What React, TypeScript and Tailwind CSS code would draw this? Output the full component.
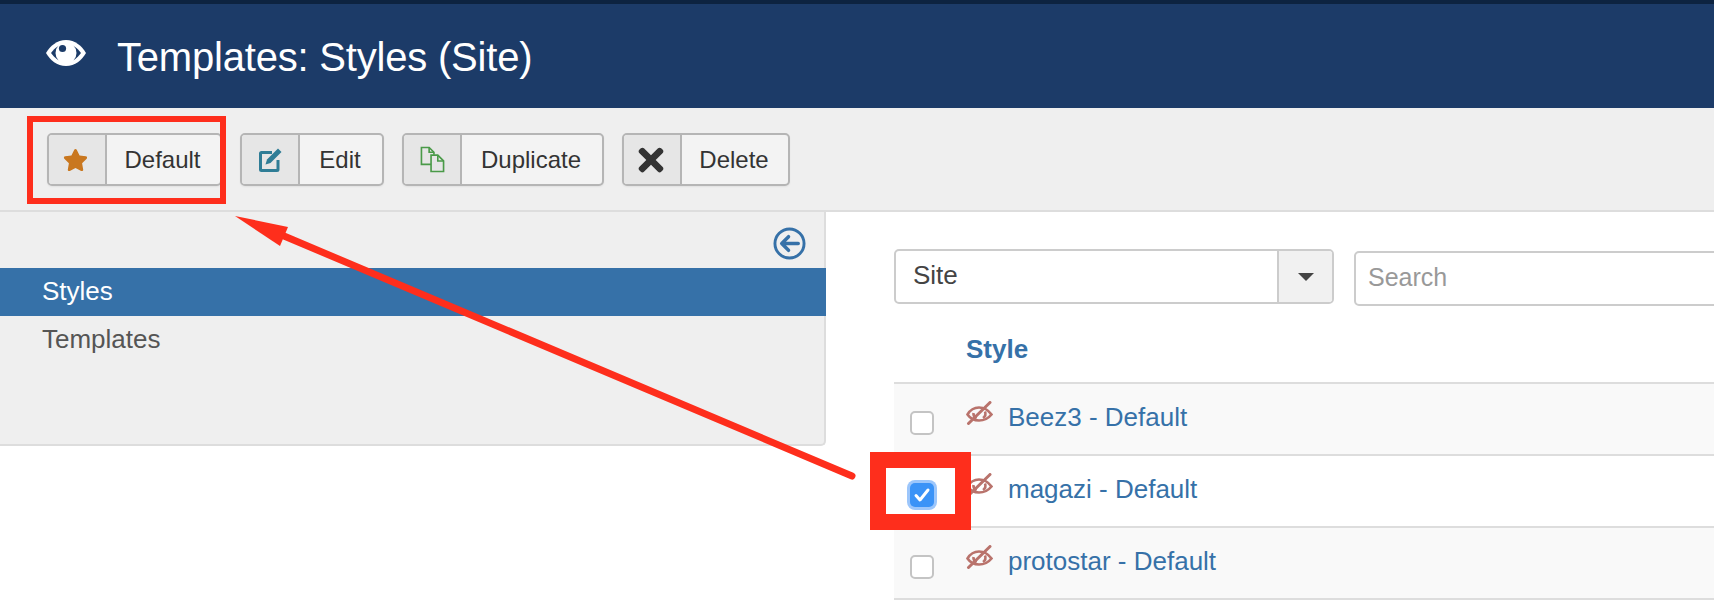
import { FaStar, FaTimes } from 'react-icons/fa';

const font = "font-['Liberation_Sans',Arial,sans-serif]";

function EyeOn({ className }: { className?: string }) {
  return (
    <svg viewBox="0 0 40 26" className={className} aria-hidden="true">
      <path fill="currentColor" d="M20 0C11 0 4 6 0 13c4 7 11 13 20 13s16-6 20-13C36 6 29 0 20 0z" />
      <path fill="#1c3b68" d="M20 4C13.500 4 8.500 8 5 13c3.500 5 8.500 9 15 9s11.500-4 15-9c-3.500-5-8.500-9-15-9z" />
      <circle cx="20" cy="13" r="10.500" fill="currentColor" />
      <circle cx="16.500" cy="8.500" r="3.600" fill="#1c3b68" />
    </svg>
  );
}

function EyeOff() {
  return (
    <svg viewBox="0 0 27 24" className="h-[24px] w-[27px] text-[#b9736c]" fill="none" stroke="currentColor" aria-hidden="true">
      <path strokeWidth="2.600" d="M1.500 13.500C4 9.300 8 6.500 13 6.500s9.500 2.800 12.500 7c-3 3.700-7.500 6-12.500 6s-9-2.300-11.500-6z" />
      <path strokeWidth="2.600" d="M7.500 12a5.500 5.500 0 0 0 3 5.500M19 10.500a5.500 5.500 0 0 1-2 6.500" />
      <path strokeWidth="3" strokeLinecap="round" d="M2.500 22.500 24 1.500" />
    </svg>
  );
}

function EditIcon() {
  return (
    <svg viewBox="0 0 24 24" className="h-[24px] w-[24px] text-[#2f7d96]" aria-hidden="true">
      <path fill="none" stroke="currentColor" strokeWidth="3" d="M14 4.500H3.500a1 1 0 0 0-1 1v16a1 1 0 0 0 1 1h15.500a1 1 0 0 0 1-1V12" />
      <path fill="currentColor" d="M20 .500l3.500 3.500-11 11-5 1.500L9 11.500z" />
    </svg>
  );
}

function DuplicateIcon() {
  return (
    <svg viewBox="0 0 26 28" className="h-[27px] w-[25px] text-[#4a9a48]" fill="none" stroke="currentColor" strokeWidth="1.700" aria-hidden="true">
      <path d="M12 19H1.500V1.500h8l5 5V9" />
      <path d="M9.500 1.500v5h5" />
      <path d="M11.500 9.500h7l6 6v11h-13z" fill="#e6e6e6" />
      <path d="M18.500 9.500v6h6" />
    </svg>
  );
}

function BackIcon() {
  return (
    <svg viewBox="0 0 34 34" className="h-[33px] w-[33px] text-[#3671a8]" fill="none" stroke="currentColor" aria-hidden="true">
      <circle cx="17" cy="17" r="15" strokeWidth="3" />
      <path d="M26 17H9.500M16 10 9 17l7 7" strokeWidth="3.600" strokeLinecap="round" strokeLinejoin="round" />
    </svg>
  );
}

function ToolButton({ icon, label, labelWidth }: { icon: React.ReactNode; label: string; labelWidth: string }) {
  return (
    <button
      type="button"
      className={`flex h-[53px] overflow-hidden rounded-[5px] border-2 border-[#b5b5b5] bg-[#f3f3f3] text-[24px] text-[#333] shadow-[0_1px_2px_rgba(0,0,0,0.06)] ${labelWidth}`}
    >
      <span className="flex h-full w-[58px] shrink-0 items-center justify-center border-r-2 border-[#b5b5b5] bg-[#e6e6e6]">
        {icon}
      </span>
      <span className="flex flex-1 items-center justify-center pr-[2px]">{label}</span>
    </button>
  );
}

function Row({ name, striped, checked }: { name: string; striped: boolean; checked?: boolean }) {
  return (
    <div className={`flex h-[72px] items-center border-b-2 border-[#dddddd] ${striped ? 'bg-[#f9f9f9]' : 'bg-white'}`}>
      <div className="flex w-[72px] justify-start pl-[16px] pt-[8px]">
        {checked ? (
          <span className="flex h-[24px] w-[24px] items-center justify-center rounded-[5px] bg-[#3b93f7] shadow-[0_0_0_3px_#9cc6fb]">
            <svg viewBox="0 0 24 24" className="h-[24px] w-[24px]" fill="none" stroke="white" strokeWidth="3" strokeLinecap="round" strokeLinejoin="round" aria-hidden="true">
              <path d="M6 12.500l4 4.500 8-10" />
            </svg>
          </span>
        ) : (
          <span className="h-[24px] w-[24px] rounded-[5px] border-2 border-[#c4c4c4] bg-white" />
        )}
      </div>
      <div className="mb-[12px]">
        <EyeOff />
      </div>
      <a className="ml-[15px] mb-[4px] text-[26px] text-[#3671a8]">{name}</a>
    </div>
  );
}

export default function App() {
  return (
    <div className={`relative h-[616px] w-[1714px] overflow-hidden bg-white ${font}`}>
      <header className="flex h-[108px] items-center border-t-[4px] border-[#0d2340] bg-[#1c3b68] pl-[46px] text-white">
        <EyeOn className="mb-[7px] h-[26px] w-[40px]" />
        <h1 className="ml-[31px] pt-[1px] text-[40px] font-normal tracking-[-0.2px]">Templates: Styles (Site)</h1>
      </header>

      <div className="flex h-[104px] gap-[18px] border-b-2 border-[#dddddd] bg-[#efefef] pl-[47px] pt-[25px]">
        <ToolButton icon={<FaStar className="mr-[4px] h-[24px] w-[25px] text-[#c9771f]" />} label="Default" labelWidth="w-[175px]" />
        <ToolButton icon={<EditIcon />} label="Edit" labelWidth="w-[144px]" />
        <ToolButton icon={<DuplicateIcon />} label="Duplicate" labelWidth="w-[202px]" />
        <ToolButton icon={<FaTimes className="mr-[2px] h-[36px] w-[36px] text-[#333]" />} label="Delete" labelWidth="w-[168px]" />
      </div>

      <div className="flex">
        <aside className="h-[234px] w-[826px] shrink-0 rounded-br-[5px] border-r-2 border-b-2 border-[#dddddd] bg-[#efefef]">
          <div className="flex h-[56px] items-center justify-end pr-[18px] pt-[6px]">
            <BackIcon />
          </div>
          <div className="mr-[-2px] flex h-[48px] items-center bg-[#3671a8] pb-[2px] pl-[42px] text-[26px] text-white">Styles</div>
          <div className="flex h-[48px] items-center pb-[2px] pl-[42px] text-[26px] text-[#555]">Templates</div>
        </aside>

        <main className="min-w-0 flex-1 pl-[68px] pt-[37px]">
          <div className="flex gap-[20px]">
            <div className="flex h-[55px] w-[440px] shrink-0 overflow-hidden rounded-[5px] border-2 border-[#cccccc]">
              <span className="flex flex-1 items-center pb-[2px] pl-[17px] text-[26px] text-[#444]">Site</span>
              <span className="flex w-[55px] items-center justify-center border-l-2 border-[#cccccc] bg-[#f1f1f1]">
                <span className="h-0 w-0 border-x-[8px] border-t-[8px] border-x-transparent border-t-[#444]" />
              </span>
            </div>
            <input
              placeholder="Search"
              className="mt-[2px] h-[55px] w-[500px] shrink-0 rounded-[5px] border-2 border-[#cccccc] pb-[2px] pl-[12px] text-[25px] placeholder:text-[#999]"
            />
          </div>
          <div className="flex h-[78px] items-center border-b-2 border-[#dddddd] pl-[72px] pt-[10px] text-[26px] font-bold text-[#3671a8]">
            Style
          </div>
          <Row name="Beez3 - Default" striped />
          <Row name="magazi - Default" striped={false} checked />
          <Row name="protostar - Default" striped />
        </main>
      </div>

      {/* annotation: red boxes and arrow */}
      <div className="absolute left-[27px] top-[116px] h-[88px] w-[199px] border-[6px] border-[#fe2e1c]" />
      <div className="absolute left-[870px] top-[452px] h-[78px] w-[101px] border-[16px] border-[#fe2e1c]" />
      <svg className="absolute left-0 top-0" width="1714" height="616" aria-hidden="true">
        <path d="M852 476 284 236" stroke="#fe2e1c" strokeWidth="7" strokeLinecap="round" fill="none" />
        <path d="M235 216 288 227 280 246z" fill="#fe2e1c" />
      </svg>
    </div>
  );
}
